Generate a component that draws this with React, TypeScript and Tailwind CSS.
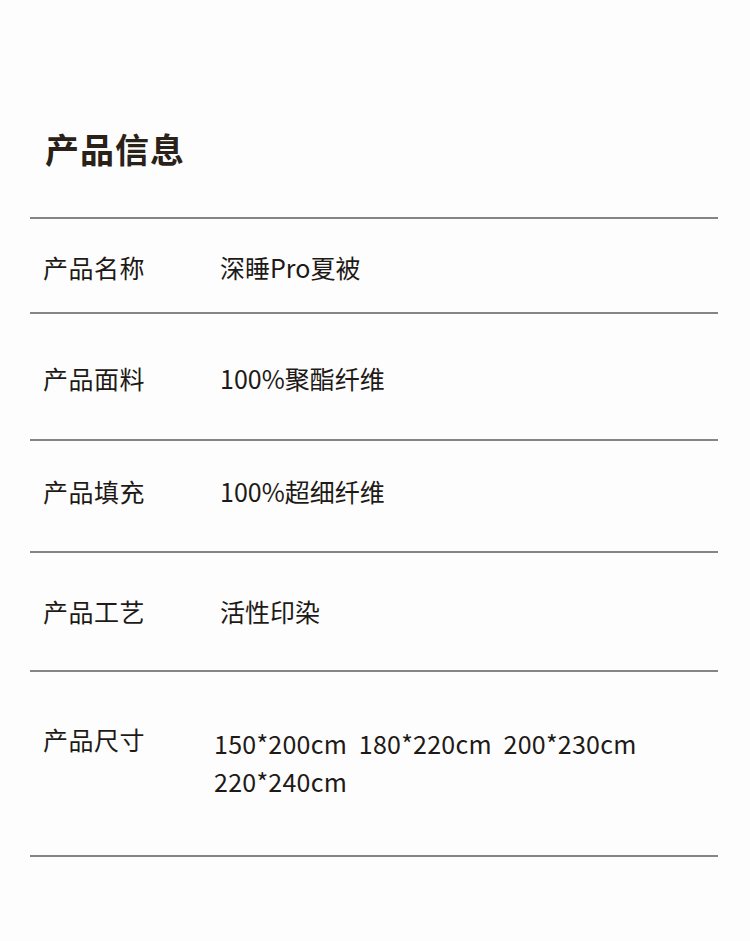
import React from "react";

const font = { fontFamily: '"Noto Sans CJK SC", "Noto Sans", sans-serif' };

export default function App() {
  return (
    <div className="w-[750px] h-[941px] bg-[#fdfdfd] overflow-hidden" style={font}>
      <div className="pt-[128px] pl-[45px]">
        <h1 className="text-[34px] leading-[42px] font-semibold text-[#2a2118] tracking-[1px]">产品信息</h1>
      </div>
      <div className="w-[688px] ml-[30px] mt-[47px] border-b-2 border-[#858585]">
        <div className="h-[95px] border-t-2 border-[#858585] pt-[29px] flex pl-[13px] text-[25px] leading-[38px] text-[#1e1a17]">
          <div className="w-[177px] tracking-[0.5px]">产品名称</div>
          <div>深睡Pro夏被</div>
        </div>
        <div className="h-[127px] border-t-2 border-[#858585] pt-[45px] flex pl-[13px] text-[25px] leading-[38px] text-[#1e1a17]">
          <div className="w-[177px] tracking-[0.5px]">产品面料</div>
          <div>100%聚酯纤维</div>
        </div>
        <div className="h-[112px] border-t-2 border-[#858585] pt-[31px] flex pl-[13px] text-[25px] leading-[38px] text-[#1e1a17]">
          <div className="w-[177px] tracking-[0.5px]">产品填充</div>
          <div>100%超细纤维</div>
        </div>
        <div className="h-[119px] border-t-2 border-[#858585] pt-[39px] flex pl-[13px] text-[25px] leading-[38px] text-[#1e1a17]">
          <div className="w-[177px] tracking-[0.5px]">产品工艺</div>
          <div>活性印染</div>
        </div>
        <div className="h-[185px] border-t-2 border-[#858585] pt-[52px] flex pl-[13px] text-[25px] leading-[38px] text-[#1e1a17]">
          <div className="w-[171px] -mt-[4px] tracking-[0.5px]">产品尺寸</div>
          <div className="whitespace-pre-wrap tracking-[0.25px]">{"150*200cm  180*220cm  200*230cm\n220*240cm"}</div>
        </div>
      </div>
    </div>
  );
}
